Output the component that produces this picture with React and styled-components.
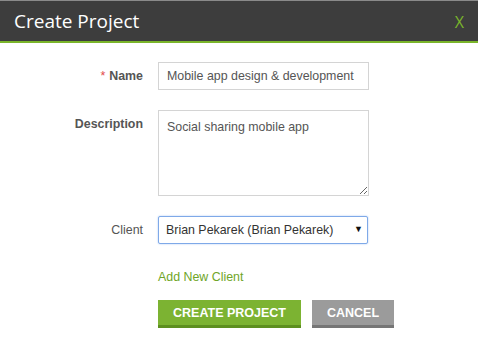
import styled, {createGlobalStyle} from "styled-components";

const Global = createGlobalStyle`
  body {
    margin: 0;
    background: #fff;
    font-family: "Liberation Sans", Arial, sans-serif;
  }
`;

const Header = styled.div`
  height: 40px;
  background: #3d3d3d;
  border-top: 1px solid #8a8a8a;
  border-bottom: 2px solid #7ab52b;
  display: flex;
  align-items: center;
  justify-content: space-between;
  padding: 0 14px;
`;

const Title = styled.h1`
  margin: 0;
  font-family: "Open Sans", sans-serif;
  font-weight: 400;
  font-size: 19px;
  color: #fff;
`;

const Close = styled.span`
  font-family: "Open Sans", sans-serif;
  font-size: 16px;
  color: #7ab52b;
  margin-top: 2px;
`;

const Form = styled.form`
  display: grid;
  grid-template-columns: 143px 211px;
  column-gap: 15px;
  row-gap: 20px;
  padding-top: 19px;
`;

const Label = styled.label`
  text-align: right;
  line-height: 28px;
  font-size: 12.4px;
  color: #555;
  font-weight: ${props => (props.bold ? 700 : 400)};
`;

const Star = styled.span`
  color: #e24b4b;
  font-weight: 400;
  margin-right: 4px;
`;

const Input = styled.input`
  box-sizing: border-box;
  height: 28px;
  width: 211px;
  border: 1px solid #d4d4d4;
  padding: 0 8px;
  font-family: "Liberation Sans", Arial, sans-serif;
  font-size: 12.4px;
  color: #555;
  outline: none;
`;

const TextArea = styled.textarea`
  box-sizing: border-box;
  height: 86px;
  width: 211px;
  border: 1px solid #d4d4d4;
  padding: 8px 8px;
  line-height: 16px;
  font-family: "Liberation Sans", Arial, sans-serif;
  font-size: 12.4px;
  color: #555;
  outline: none;
  resize: vertical;
  display: block;
`;

const SelectWrap = styled.div`
  position: relative;
  width: 210px;
  &::after {
    content: "▼";
    position: absolute;
    right: 5px;
    top: 8px;
    font-size: 9px;
    color: #111;
    pointer-events: none;
  }
`;

const Select = styled.select`
  box-sizing: border-box;
  appearance: none;
  width: 210px;
  height: 28px;
  border: 1px solid #7fa9e8;
  box-shadow: 0 0 2px #a9c7f3;
  border-radius: 2px;
  padding: 0 7px;
  background: #fff;
  font-family: "Liberation Sans", Arial, sans-serif;
  font-size: 12.4px;
  color: #333;
  outline: none;
`;

const Link = styled.a`
  grid-column: 2;
  font-size: 12.4px;
  color: #6fa528;
  text-decoration: none;
  line-height: 16px;
  margin-top: 5px;
`;

const Actions = styled.div`
  grid-column: 2;
  display: flex;
  gap: 11px;
  margin-top: -5px;
`;

const Button = styled.button`
  box-sizing: border-box;
  height: 28px;
  padding: 1px 15px 0;
  border: none;
  border-bottom: 3px solid ${props => (props.primary ? "#5d8f1f" : "#767676")};
  background: ${props => (props.primary ? "#7cb332" : "#9b9b9b")};
  color: #fff;
  font-family: "Liberation Sans", Arial, sans-serif;
  font-weight: 700;
  font-size: 12.5px;
  white-space: nowrap;
`;

export default () => {
  return (
    <>
      <Global />
      <Header>
        <Title>Create Project</Title>
        <Close>X</Close>
      </Header>
      <Form>
        <Label bold><Star>*</Star>Name</Label>
        <Input defaultValue="Mobile app design & development" />
        <Label bold>Description</Label>
        <TextArea defaultValue="Social sharing mobile app" />
        <Label>Client</Label>
        <SelectWrap>
          <Select defaultValue="brian">
            <option value="brian">Brian Pekarek (Brian Pekarek)</option>
          </Select>
        </SelectWrap>
        <Link href="#">Add New Client</Link>
        <Actions>
          <Button type="button" primary>CREATE PROJECT</Button>
          <Button type="button">CANCEL</Button>
        </Actions>
      </Form>
    </>
  );
};
